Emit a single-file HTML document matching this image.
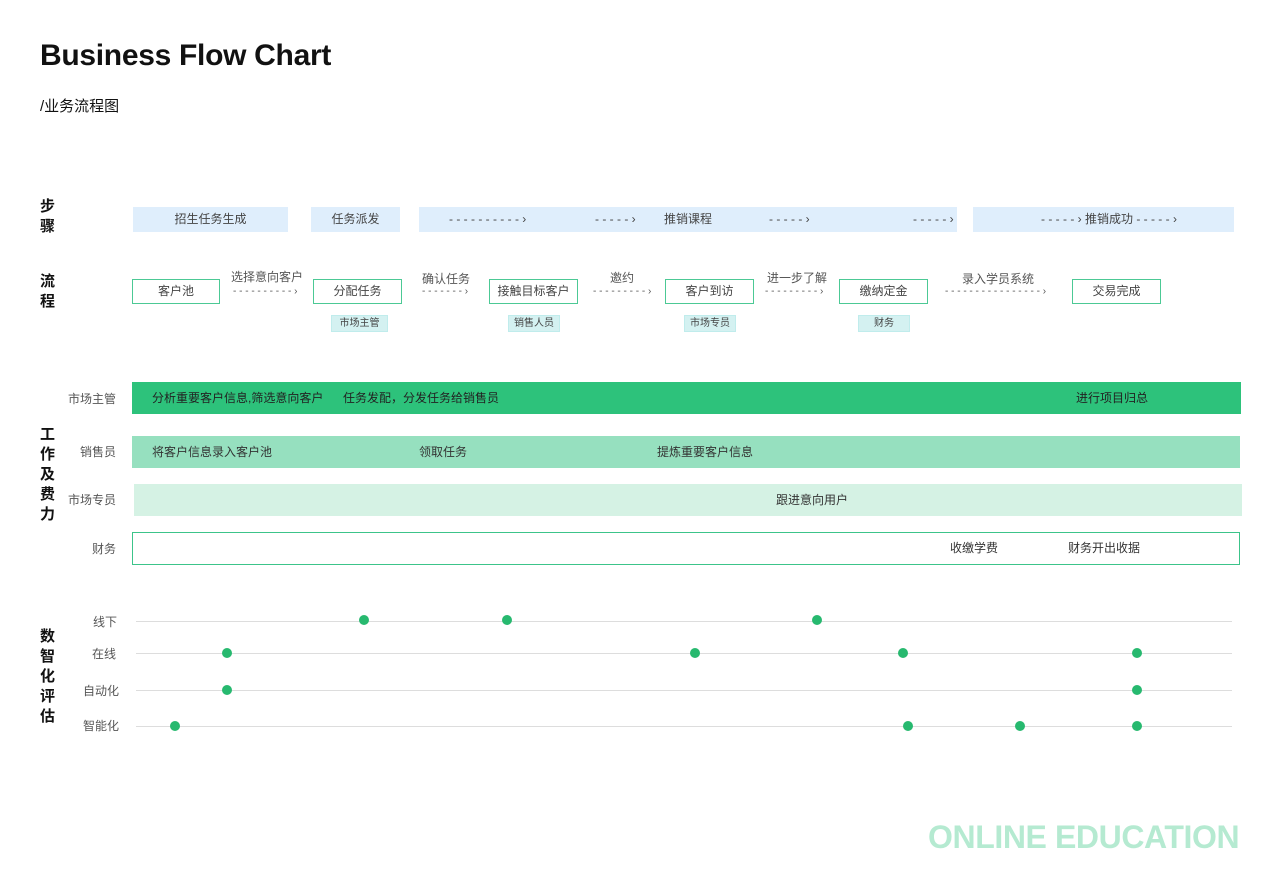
<!DOCTYPE html><html><head><meta charset="utf-8"><style>
body{margin:0;width:1280px;height:896px;background:#fff;position:relative;font-family:"Liberation Sans","Noto Sans CJK SC",sans-serif;color:#333;overflow:hidden}
.a{position:absolute}
.st{position:absolute;background:#dfeefc;height:25px;top:207px;font-size:12px;line-height:25px;color:#444}
.fb{position:absolute;top:279px;height:23px;border:1px solid #4cc995;font-size:12px;line-height:23px;text-align:center;color:#444;box-sizing:content-box}
.tg{position:absolute;top:315px;height:15px;background:#d4f1f1;border:1px solid #c0ecec;font-size:10px;line-height:15px;text-align:center;color:#444}
.lb{position:absolute;font-size:12px;color:#555}
.hd{position:absolute;left:40px;font-size:15px;font-weight:bold;line-height:20px;color:#111;width:16px}
.bar{position:absolute;height:32px;font-size:12px;line-height:32px;color:#333}
.ln{position:absolute;left:136px;width:1096px;height:1px;background:#ddd}
.d{position:absolute;width:10px;height:10px;border-radius:50%;background:#27b96f}
.ar{position:absolute;font-size:10px;color:#555}
</style></head><body>
<div class="a" style="left:40px;top:39px;font-size:30px;font-weight:bold;color:#111;letter-spacing:-0.3px">Business Flow Chart</div>
<div class="a" style="left:40px;top:95px;font-size:15px;color:#111">/业务流程图</div>

<div class="hd" style="top:197px">步<br>骤</div>
<div class="hd" style="top:272px">流<br>程</div>
<div class="hd" style="top:425px">工<br>作<br>及<br>费<br>力</div>
<div class="hd" style="top:627px">数<br>智<br>化<br>评<br>估</div>

<div class="st" style="left:133px;width:155px;text-align:center">招生任务生成</div>
<div class="st" style="left:311px;width:89px;text-align:center">任务派发</div>
<div class="st" style="left:419px;width:538px"><span class="a" style="left:30px">- - - - - - - - - - ›</span><span class="a" style="left:176px">- - - - - ›</span><span class="a" style="left:245px">推销课程</span><span class="a" style="left:350px">- - - - - ›</span><span class="a" style="left:494px">- - - - - ›</span></div>
<div class="st" style="left:973px;width:261px"><span class="a" style="left:68px">- - - - - › 推销成功 - - - - - ›</span></div>

<div class="fb" style="left:132px;width:86px">客户池</div>
<div class="fb" style="left:313px;width:87px">分配任务</div>
<div class="fb" style="left:489px;width:87px">接触目标客户</div>
<div class="fb" style="left:665px;width:87px">客户到访</div>
<div class="fb" style="left:839px;width:87px">缴纳定金</div>
<div class="fb" style="left:1072px;width:87px">交易完成</div>

<div class="lb" style="left:231px;top:268px">选择意向客户</div><div class="ar" style="left:233px;top:286px">- - - - - - - - - - ›</div>
<div class="lb" style="left:422px;top:270px">确认任务</div><div class="ar" style="left:422px;top:286px">- - - - - - - ›</div>
<div class="lb" style="left:610px;top:269px">邀约</div><div class="ar" style="left:593px;top:286px">- - - - - - - - - ›</div>
<div class="lb" style="left:767px;top:269px">进一步了解</div><div class="ar" style="left:765px;top:286px">- - - - - - - - - ›</div>
<div class="lb" style="left:962px;top:270px">录入学员系统</div><div class="ar" style="left:945px;top:286px">- - - - - - - - - - - - - - - - ›</div>

<div class="tg" style="left:331px;width:55px">市场主管</div>
<div class="tg" style="left:508px;width:50px">销售人员</div>
<div class="tg" style="left:684px;width:50px">市场专员</div>
<div class="tg" style="left:858px;width:50px">财务</div>

<div class="lb" style="left:68px;top:390px">市场主管</div>
<div class="lb" style="left:80px;top:443px">销售员</div>
<div class="lb" style="left:68px;top:491px">市场专员</div>
<div class="lb" style="left:92px;top:540px">财务</div>

<div class="bar" style="left:132px;top:382px;width:1109px;background:#2dc27b;color:#222"><span class="a" style="left:20px">分析重要客户信息,筛选意向客户</span><span class="a" style="left:211px">任务发配，分发任务给销售员</span><span class="a" style="left:944px">进行项目归总</span></div>
<div class="bar" style="left:132px;top:436px;width:1108px;background:#96e0bf"><span class="a" style="left:20px">将客户信息录入客户池</span><span class="a" style="left:287px">领取任务</span><span class="a" style="left:525px">提炼重要客户信息</span></div>
<div class="bar" style="left:134px;top:484px;width:1108px;background:#d5f2e4"><span class="a" style="left:642px">跟进意向用户</span></div>
<div class="bar" style="left:132px;top:532px;width:1106px;height:31px;border:1px solid #3cc48a;line-height:31px"><span class="a" style="left:817px">收缴学费</span><span class="a" style="left:935px">财务开出收据</span></div>

<div class="lb" style="left:93px;top:613px">线下</div>
<div class="lb" style="left:92px;top:645px">在线</div>
<div class="lb" style="left:83px;top:682px">自动化</div>
<div class="lb" style="left:83px;top:717px">智能化</div>
<div class="ln" style="top:621px"></div><div class="ln" style="top:653px"></div><div class="ln" style="top:690px"></div><div class="ln" style="top:726px"></div>
<div class="d" style="left:359px;top:615px"></div><div class="d" style="left:502px;top:615px"></div><div class="d" style="left:812px;top:615px"></div>
<div class="d" style="left:222px;top:648px"></div><div class="d" style="left:690px;top:648px"></div><div class="d" style="left:898px;top:648px"></div><div class="d" style="left:1132px;top:648px"></div>
<div class="d" style="left:222px;top:685px"></div><div class="d" style="left:1132px;top:685px"></div>
<div class="d" style="left:170px;top:721px"></div><div class="d" style="left:903px;top:721px"></div><div class="d" style="left:1015px;top:721px"></div><div class="d" style="left:1132px;top:721px"></div>

<div class="a" style="left:928px;top:819px;font-size:32px;font-weight:bold;color:#b5ead1;letter-spacing:-0.4px">ONLINE EDUCATION</div>
</body></html>
